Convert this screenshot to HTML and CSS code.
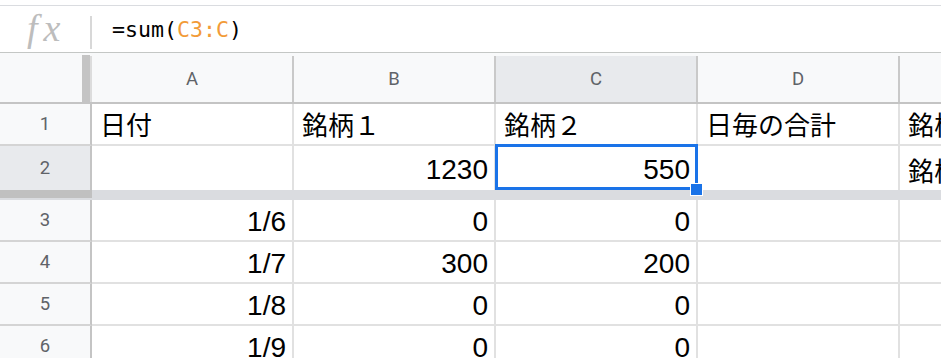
FILE: index.html
```html
<!DOCTYPE html>
<html lang="ja">
<head>
<meta charset="utf-8">
<title>Sheet</title>
<link rel="stylesheet" href="styles.css">
</head>
<body>
<div class="sheet">
  <div class="top-gap"></div>
  <div class="fbar">
    <span class="fx">fx</span>
    <span class="sep"></span>
    <span class="formula">=sum(<span class="ref">C3:C</span>)</span>
  </div>
  <div class="row hdr">
    <div class="corner"><span class="handle"></span></div>
    <div class="ch">A</div>
    <div class="ch">B</div>
    <div class="ch sel">C</div>
    <div class="ch">D</div>
    <div class="ch">E</div>
  </div>
  <div class="row r1">
    <div class="rh">1</div>
    <div class="c">日付</div>
    <div class="c">銘柄１</div>
    <div class="c">銘柄２</div>
    <div class="c">日毎の合計</div>
    <div class="c">銘柄３</div>
  </div>
  <div class="row r2">
    <div class="rh sel">2</div>
    <div class="c"></div>
    <div class="c num">1230</div>
    <div class="c num active">550<span class="selbox"></span><span class="fill"></span></div>
    <div class="c"></div>
    <div class="c">銘柄４</div>
  </div>
  <div class="row band">
    <div class="band-h"></div>
    <div class="band-c"></div>
  </div>
  <div class="row">
    <div class="rh">3</div>
    <div class="c num">1/6</div>
    <div class="c num">0</div>
    <div class="c num">0</div>
    <div class="c"></div>
    <div class="c"></div>
  </div>
  <div class="row">
    <div class="rh">4</div>
    <div class="c num">1/7</div>
    <div class="c num">300</div>
    <div class="c num">200</div>
    <div class="c"></div>
    <div class="c"></div>
  </div>
  <div class="row">
    <div class="rh">5</div>
    <div class="c num">1/8</div>
    <div class="c num">0</div>
    <div class="c num">0</div>
    <div class="c"></div>
    <div class="c"></div>
  </div>
  <div class="row">
    <div class="rh">6</div>
    <div class="c num">1/9</div>
    <div class="c num">0</div>
    <div class="c num">0</div>
    <div class="c"></div>
    <div class="c"></div>
  </div>
</div>
</body>
</html>
```

FILE: styles.css
```css
* { box-sizing: border-box; }
html, body { margin: 0; padding: 0; background: #fff; }
body { width: 941px; height: 358px; overflow: hidden; }
.sheet { width: 941px; overflow: hidden; font-family: "Liberation Sans", Arial, "Noto Sans CJK JP", sans-serif; }

.top-gap { height: 5px; background: #fff; }
.fbar {
  height: 48px;
  border-top: 1px solid #dadce0;
  border-bottom: 1px solid #c4c7c5;
  display: flex;
  align-items: center;
  background: #fff;
}
.fx {
  width: 90px;
  padding-left: 27px;
  font-family: "Liberation Serif", "Times New Roman", serif;
  font-style: italic;
  font-size: 38px;
  letter-spacing: 6px;
  color: #bdbdbd;
  line-height: 1;
  margin-top: -3px;
}
.sep { width: 2px; height: 33px; background: #d8d8d8; margin-top: 6px; }
.formula {
  margin-left: 20px;
  font-family: "DejaVu Sans Mono", "Liberation Mono", monospace;
  font-size: 21.6px;
  color: #000;
  margin-top: 1px;
}
.ref { color: #f29b38; }

.row {
  display: grid;
  grid-template-columns: 92px repeat(5, 202px);
  width: 1102px;
}
.hdr { background: #f8f9fa; padding-top: 3px; border-bottom: 2px solid #c4c4c4; }
.corner { position: relative; height: 46px; border-right: 2px solid #dcdcdc; }
.handle { position: absolute; right: 0; top: -1px; width: 8px; bottom: 0; background: #c4c4c4; }
.ch {
  height: 46px;
  border-right: 2px solid #c9c9c9;
  display: flex; align-items: center; justify-content: center;
  font-family: Roboto, "Liberation Sans", sans-serif;
  font-size: 18.5px;
  color: #5f6368;
}
.ch.sel { background: #e8eaed; }

.rh {
  height: 42px;
  background: #f8f9fa;
  border-right: 2px solid #c4c4c4;
  border-bottom: 2px solid #d4d4d4;
  display: flex; align-items: center; justify-content: center;
  font-family: Roboto, "Liberation Sans", sans-serif;
  font-size: 18.5px;
  color: #5f6368;
}
.rh.sel { background: #e8eaed; }
.c {
  height: 42px;
  border-right: 2px solid #e1e1e1;
  border-bottom: 2px solid #e1e1e1;
  display: flex; align-items: flex-end;
  padding: 0 6px 2px 8px;
  font-size: 28px;
  color: #000;
  white-space: nowrap;
  overflow: visible;
  font-family: "Liberation Sans", Arial, "Noto Sans CJK JP", sans-serif;
}
.c.num { justify-content: flex-end; }
.r1 .c { font-family: "Noto Sans CJK JP", sans-serif; font-size: 26px; padding-bottom: 3px; line-height: 1.3; }
.r2 .c, .r2 .rh { height: 44px; border-bottom: 0; }
.r2 .c { padding-bottom: 4px; }
.r2 .c:last-child { font-family: "Noto Sans CJK JP", sans-serif; font-size: 26px; line-height: 1.3; padding-bottom: 3px; }
.active { position: relative; }
.selbox {
  position: absolute;
  left: -1px; top: -2px; right: -2px; bottom: 0;
  border: 3px solid #1a73e8;
  z-index: 2;
}
.fill {
  position: absolute;
  left: 194px; top: 37px;
  width: 13px; height: 13px;
  background: #1a73e8;
  border: 1px solid #fff;
  z-index: 3;
}
.band { height: 10px; }
.band-h { background: linear-gradient(#c0c0c0 0 8px, #dadce0 8px); }
.band-c { grid-column: 2 / 7; background: #dadce0; }
```
